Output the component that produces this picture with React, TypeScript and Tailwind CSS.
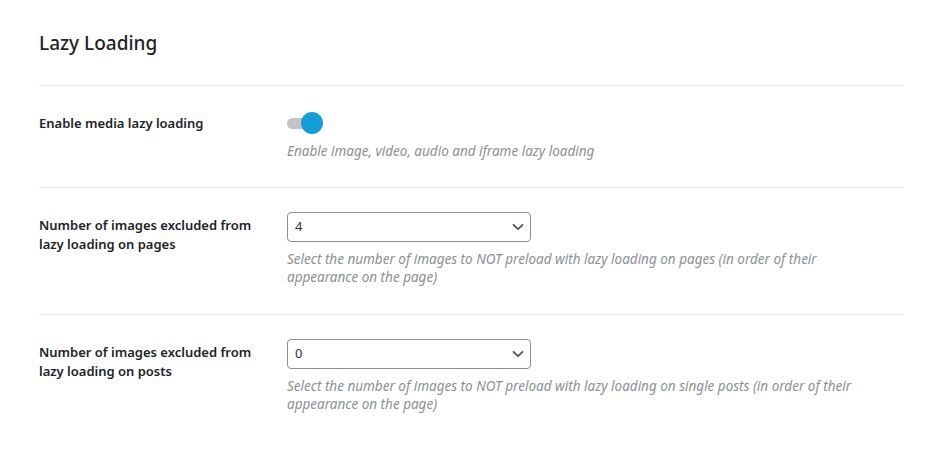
import React from "react";

function Chevron() {
  return (
    <svg width="12" height="8" viewBox="0 0 12 8" className="shrink-0">
      <path d="M1.5 1.8 L6 6.2 L10.5 1.8" fill="none" stroke="#50575e" strokeWidth="1.8" strokeLinecap="round" strokeLinejoin="round" />
    </svg>
  );
}

function Select({ value }: { value: string }) {
  return (
    <div className="flex h-[30px] w-[244px] items-center justify-between rounded-[4px] border border-[#8c8f94] bg-white pl-[7px] pr-[6px] text-[13px] text-[#2c3338]">
      <span>{value}</span>
      <Chevron />
    </div>
  );
}

function Row({ label, control, desc, pt, pb, lpt, last }: { label: React.ReactNode; control: React.ReactNode; desc: string; pt: string; pb: string; lpt: string; last?: boolean }) {
  return (
    <div className={`flex ${last ? "" : "border-b border-[#e8e8e8]"} ${pt} ${pb}`}>
      <div className={`w-[248px] shrink-0 pr-[20px] ${lpt} text-[13px] font-semibold leading-[19px] text-[#1d2327]`}>{label}</div>
      <div className="flex flex-col">
        {control}
        <p className="mt-[8px] max-w-[590px] text-[13.5px] italic leading-[18px] text-[#8c8f94]">{desc}</p>
      </div>
    </div>
  );
}

export default function App() {
  return (
    <div className="min-h-[459px] bg-white px-[39px] pr-[40px] pt-[30px]" style={{ fontFamily: '"Noto Sans", "Open Sans", sans-serif' }}>
      <h2 className="pb-[28px] text-[19px] font-medium leading-[27px] text-[#1d2327]">Lazy Loading</h2>
      <div className="border-t border-[#e8e8e8]">
        <Row
          pt="pt-[26px]"
          pb="pb-[27px]"
          lpt="pt-[2px]"
          label="Enable media lazy loading"
          control={
            <div className="relative h-[22px] w-[36px]">
              <div className="absolute left-0 top-[6px] h-[11px] w-[26px] rounded-full bg-[#c3c4c7]" />
              <div className="absolute left-[14px] top-0 h-[22px] w-[22px] rounded-full bg-[#119fd6]" />
            </div>
          }
          desc="Enable image, video, audio and iframe lazy loading"
        />
        <Row
          pt="pt-[24px]"
          pb="pb-[28px]"
          lpt="pt-[4px]"
          label="Number of images excluded from lazy loading on pages"
          control={<Select value="4" />}
          desc="Select the number of images to NOT preload with lazy loading on pages (in order of their appearance on the page)"
        />
        <Row
          pt="pt-[24px]"
          pb="pb-[28px]"
          lpt="pt-[4px]"
          last
          label="Number of images excluded from lazy loading on posts"
          control={<Select value="0" />}
          desc="Select the number of images to NOT preload with lazy loading on single posts (in order of their appearance on the page)"
        />
      </div>
    </div>
  );
}
